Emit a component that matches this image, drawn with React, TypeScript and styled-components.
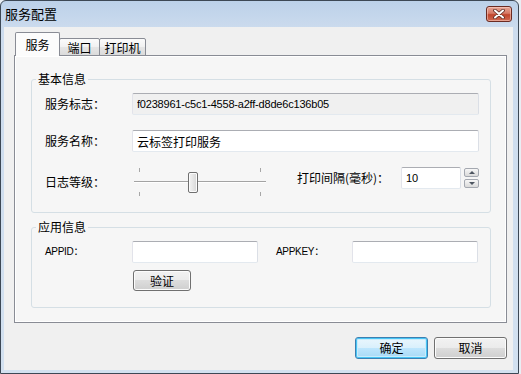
import React from 'react'
import styled, { createGlobalStyle } from 'styled-components'

const GlobalStyle = createGlobalStyle`
  html, body {
    margin: 0;
    padding: 0;
    background: #e9eef4;
  }
  body {
    font-family: "Liberation Sans", "Noto Sans CJK SC", sans-serif;
    font-size: 12px;
    color: #000;
  }
  * {
    box-sizing: border-box;
  }
`

const cjk = `"Noto Sans CJK SC", "Liberation Sans", sans-serif`

const Window = styled.div`
  width: 519px;
  height: 374px;
  display: flex;
  flex-direction: column;
  border: 1px solid #3d4855;
  border-radius: 6px 6px 0 0;
  padding: 0 5px 3px 3px;
  background: linear-gradient(#bcd1e9, #cddcee 30px, #d3e1f0);
`

const TitleBar = styled.div`
  height: 26px;
  display: flex;
  align-items: center;
  justify-content: space-between;
`

const Title = styled.span`
  font-family: ${cjk};
  font-size: 13px;
  line-height: 16px;
  padding-left: 1px;
`

const CloseButton = styled.div`
  width: 26px;
  height: 16px;
  margin-right: 1px;
  margin-top: -1px;
  border: 1px solid #6b2b22;
  border-radius: 3px;
  background: linear-gradient(#e7a596, #d67965 45%, #c0452c 55%, #cf6a52);
  box-shadow: inset 0 0 0 1px rgba(255, 220, 210, 0.5);
  display: flex;
  align-items: center;
  justify-content: center;
`

const Body = styled.div`
  flex: 1;
  display: flex;
  flex-direction: column;
  background: #f0f0f0;
  padding: 5px 6px 0 10px;
`

const TabStrip = styled.div`
  height: 24px;
  display: flex;
  align-items: flex-end;
  padding-left: 2px;
  margin-bottom: -1px;
  position: relative;
  z-index: 1;
`

const Tab = styled.div<{ $active?: boolean; $w: number }>`
  width: ${(p) => p.$w}px;
  height: ${(p) => (p.$active ? 24 : 18)}px;
  margin-left: -1px;
  border: 1px solid #898c95;
  border-bottom: ${(p) => (p.$active ? 'none' : '1px solid #898c95')};
  border-radius: 2px 2px 0 0;
  background: ${(p) =>
    p.$active
      ? '#fcfcfc'
      : 'linear-gradient(#fbfbfb, #f1f1f1 50%, #e6e6e6 50%, #dbdbdb)'};
  position: relative;
  z-index: ${(p) => (p.$active ? 2 : 1)};
  display: flex;
  align-items: center;
  justify-content: center;
  padding-top: ${(p) => (p.$active ? 1 : 1)}px;
  font-family: ${cjk};
  font-size: 12px;
  line-height: 14px;
`

const Panel = styled.div`
  flex: 1;
  display: flex;
  flex-direction: column;
  gap: 6px;
  border: 1px solid #898c95;
  background: #f6f6f6;
  box-shadow: inset 1px 1px 0 #fff, inset -1px -1px 0 #fff;
  padding: 15px 15px 0 16px;
`

const Group = styled.fieldset`
  margin: 0;
  padding: 0;
  min-inline-size: 0;
  border: 1px solid #d5dfe5;
  border-radius: 3px;
`

const Legend = styled.legend`
  margin-left: 4px;
  padding: 0 2px;
  font-family: ${cjk};
  font-size: 12px;
  line-height: 16px;
`

const GroupBody = styled.div<{ $bottom: number }>`
  padding: 6px 11px ${(p) => p.$bottom}px 13px;
`

const FormGrid = styled.div`
  display: grid;
  grid-template-columns: 87px 1fr;
  grid-template-rows: 22px 22px 30px;
  row-gap: 15px;
  align-items: center;
`

const Label = styled.span<{ $latin?: boolean }>`
  font-family: ${(p) => (p.$latin ? `"Liberation Sans", "Noto Sans CJK SC", sans-serif` : cjk)};
  font-size: ${(p) => (p.$latin ? 10 : 12)}px;
  letter-spacing: ${(p) => (p.$latin ? -0.3 : 0)}px;
  line-height: 16px;
  white-space: nowrap;
`

const Field = styled.input<{ $w?: number; $small?: boolean }>`
  width: ${(p) => (p.$w ? `${p.$w}px` : '100%')};
  height: 22px;
  margin: 0;
  padding: 0 4px;
  border: 1px solid;
  border-color: #abadb3 #dbdfe6 #e3e9ef #e2e3ea;
  border-radius: 2px;
  background: ${(p) => (p.readOnly ? '#f0f0f0' : '#fff')};
  font-family: ${(p) => (p.$small ? `"Liberation Sans", sans-serif` : cjk)};
  font-size: ${(p) => (p.$small ? 11 : 12)}px;
  letter-spacing: ${(p) => (p.$small ? -0.2 : 0)}px;
  color: #000;
  outline: none;
`

const LevelRow = styled.div`
  height: 30px;
  display: flex;
  align-items: center;
`

const Slider = styled.div`
  position: relative;
  width: 134px;
  height: 28px;
  margin-left: 1px;
  display: flex;
  flex-direction: column;
  justify-content: space-between;
`

const TickRow = styled.div`
  height: 4px;
  display: flex;
  justify-content: space-between;
  padding: 0 6px;
  &::before,
  &::after {
    content: '';
    width: 1px;
    height: 4px;
    background: #a7a7a7;
  }
`

const Track = styled.div`
  height: 2px;
  margin: 0 1px;
  border-top: 1px solid #a3a3a3;
  border-bottom: 1px solid #fff;
  background: #e3e3e3;
`

const Thumb = styled.div`
  position: absolute;
  top: 4px;
  width: 10px;
  height: 21px;
  border: 1px solid #707070;
  border-radius: 2px;
  background: linear-gradient(to right, #f4f4f4, #e6e6e6 50%, #d6d6d6);
  box-shadow: inset 0 0 0 1px #fbfbfb;
`

const IntervalLabel = styled(Label)`
  margin-left: auto;
  margin-right: 12px;
  align-self: flex-start;
  line-height: 22px;
`

const Spin = styled.div`
  align-self: flex-start;
  display: flex;
  gap: 3px;
`

const SpinButtons = styled.div`
  display: flex;
  flex-direction: column;
  gap: 2px;
  padding-top: 1px;
`

const SpinBtn = styled.div<{ $down?: boolean }>`
  width: 15px;
  height: 9px;
  border: 1px solid #a4a8b0;
  border-radius: 2px;
  background: linear-gradient(#f7f7f7, #e8e8e8 50%, #dadada);
  display: flex;
  align-items: center;
  justify-content: center;
  &::after {
    content: '';
    border-left: 3px solid transparent;
    border-right: 3px solid transparent;
    ${(p) => (p.$down ? 'border-top: 3px solid #4d5560;' : 'border-bottom: 3px solid #4d5560;')}
  }
`

const AppRow = styled.div`
  display: flex;
  align-items: center;
  height: 22px;
`

const AppKeyLabel = styled(Label)`
  width: 76px;
  margin-left: 18px;
`

const Button = styled.div<{ $primary?: boolean; $w: number; $h: number }>`
  width: ${(p) => p.$w}px;
  height: ${(p) => p.$h}px;
  border: 1px solid ${(p) => (p.$primary ? '#3c7fb1' : '#707070')};
  border-radius: 3px;
  background: ${(p) =>
    p.$primary
      ? 'linear-gradient(#eaf6fd, #d9f0fc 50%, #bee6fd 50%, #a7d9f5)'
      : 'linear-gradient(#f2f2f2, #ebebeb 50%, #dddddd 50%, #cfcfcf)'};
  box-shadow: ${(p) =>
    p.$primary
      ? 'inset 0 0 0 1px #48c5f5, inset 0 0 0 2px #c9ecfb'
      : 'inset 0 0 0 1px #fcfcfc'};
  display: flex;
  align-items: center;
  justify-content: center;
  font-family: ${cjk};
  font-size: 12px;
  line-height: 14px;
`

const VerifyButton = styled(Button)`
  margin: 7px 0 0 88px;
`

const Footer = styled.div`
  height: 47px;
  display: flex;
  justify-content: flex-end;
  align-items: flex-start;
  gap: 6px;
  padding-top: 14px;
`

const level = 4
const levelMax = 9

export default function App() {
  const thumbLeft = 6 + (level / levelMax) * 122 - 5

  return (
    <>
      <GlobalStyle />
      <Window>
        <TitleBar>
          <Title>服务配置</Title>
          <CloseButton>
            <svg width="12" height="10" viewBox="0 0 12 10">
              <path d="M2 1.5 L10 8.5 M10 1.5 L2 8.5" stroke="#5a2a22" strokeWidth="3.6" strokeLinecap="round" />
              <path d="M2 1.5 L10 8.5 M10 1.5 L2 8.5" stroke="#fff" strokeWidth="2" strokeLinecap="round" />
            </svg>
          </CloseButton>
        </TitleBar>
        <Body>
          <TabStrip>
            <Tab $active $w={45}>服务</Tab>
            <Tab $w={41}>端口</Tab>
            <Tab $w={47}>打印机</Tab>
          </TabStrip>
          <Panel>
            <Group>
              <Legend>基本信息</Legend>
              <GroupBody $bottom={15}>
                <FormGrid>
                  <Label>服务标志：</Label>
                  <Field readOnly $small defaultValue="f0238961-c5c1-4558-a2ff-d8de6c136b05" />
                  <Label>服务名称：</Label>
                  <Field defaultValue="云标签打印服务" />
                  <Label>日志等级：</Label>
                  <LevelRow>
                    <Slider>
                      <TickRow />
                      <Track />
                      <TickRow />
                      <Thumb style={{ left: thumbLeft }} />
                    </Slider>
                    <IntervalLabel>打印间隔(毫秒)：</IntervalLabel>
                    <Spin>
                      <Field $w={60} $small defaultValue="10" />
                      <SpinButtons>
                        <SpinBtn />
                        <SpinBtn $down />
                      </SpinButtons>
                    </Spin>
                  </LevelRow>
                </FormGrid>
              </GroupBody>
            </Group>
            <Group>
              <Legend>应用信息</Legend>
              <GroupBody $bottom={16}>
                <AppRow>
                  <Label $latin style={{ width: 87 }}>APPID：</Label>
                  <Field $w={126} $small />
                  <AppKeyLabel $latin>APPKEY：</AppKeyLabel>
                  <Field $w={126} $small />
                </AppRow>
                <VerifyButton $w={58} $h={21}>验证</VerifyButton>
              </GroupBody>
            </Group>
          </Panel>
          <Footer>
            <Button $primary $w={73} $h={22}>确定</Button>
            <Button $w={73} $h={22}>取消</Button>
          </Footer>
        </Body>
      </Window>
    </>
  )
}
